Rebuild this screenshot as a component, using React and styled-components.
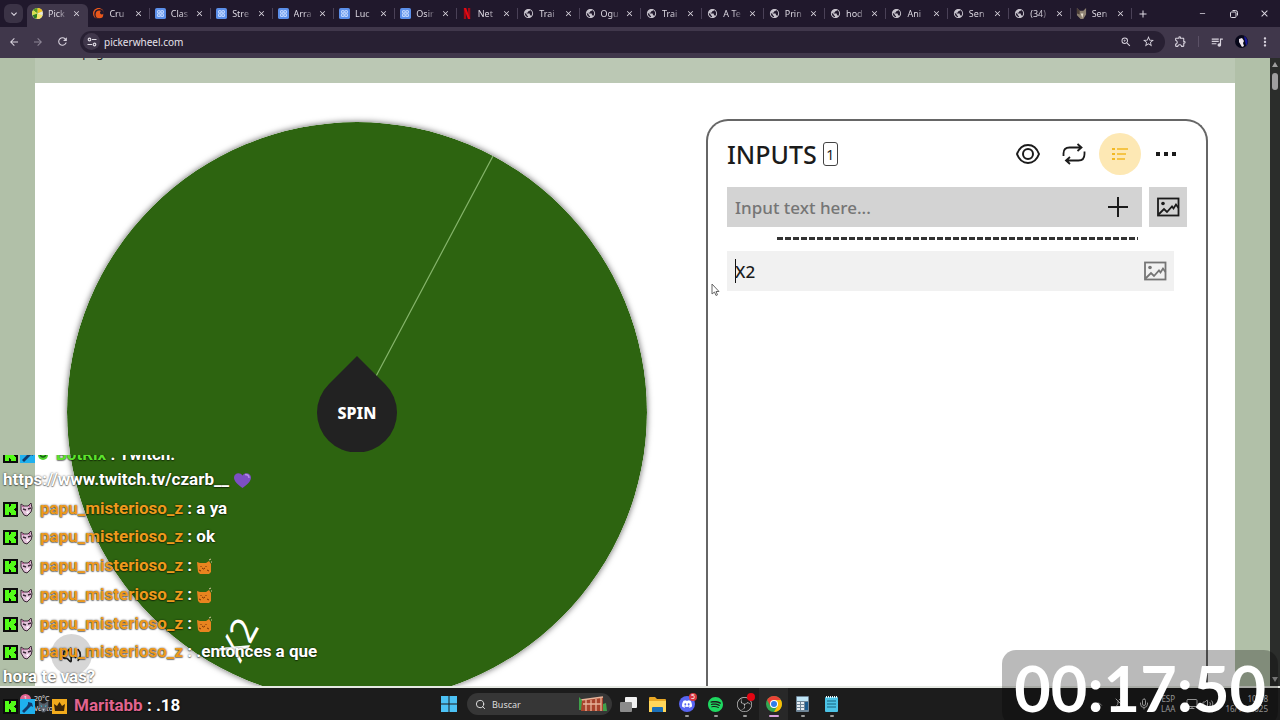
import React from "react";
import styled, { createGlobalStyle, css } from "styled-components";
import {
  SiDiscord,
  SiSpotify,
  SiObsstudio,
  SiCrunchyroll,
} from "react-icons/si";
import {
  MdPublic,
  MdClose,
  MdAdd,
  MdRemove,
  MdExpandMore,
  MdArrowBack,
  MdArrowForward,
  MdRefresh,
  MdZoomIn,
  MdStarBorder,
  MdOutlineExtension,
  MdQueueMusic,
  MdMoreVert,
} from "react-icons/md";
import { Search, Mic, Volume2, Monitor, BellOff, ChevronUp } from "lucide-react";

const tabs = [
  { icon: "wheel", title: "Pick", active: true },
  { icon: "crunchy", title: "Cru" },
  { icon: "blue", title: "Clas" },
  { icon: "blue", title: "Stre" },
  { icon: "blue", title: "Arra" },
  { icon: "blue", title: "Luc" },
  { icon: "blue", title: "Osir" },
  { icon: "netflix", title: "Net" },
  { icon: "globe", title: "Trai" },
  { icon: "globe", title: "Ogu" },
  { icon: "globe", title: "Trai" },
  { icon: "globe", title: "A Te" },
  { icon: "globe", title: "Prin" },
  { icon: "globe", title: "hod" },
  { icon: "globe", title: "Ani" },
  { icon: "globe", title: "Sen" },
  { icon: "globe", title: "(34)" },
  { icon: "cat", title: "Sen" },
];

const messages = [
  { user: "BotRix", color: "#5ce22c", badges: ["kick", "mod", "bot"], text: "Twitch. https://www.twitch.tv/czarb__", emote: "heart" },
  { user: "papu_misterioso_z", text: "a ya" },
  { user: "papu_misterioso_z", text: "ok" },
  { user: "papu_misterioso_z", emote: "cat" },
  { user: "papu_misterioso_z", emote: "cat" },
  { user: "papu_misterioso_z", emote: "cat" },
  { user: "papu_misterioso_z", text: ".entonces a que hora te vas?" },
  { user: "Maritabb", color: "#e0648f", badges: ["kick", "mod", "wolf", "crown"], text: ".18" },
];

const Favicon = ({ kind }) => {
  switch (kind) {
    case "wheel":
      return (
        <svg width="11" height="11" viewBox="0 0 12 12">
          <circle cx="6" cy="6" r="6" fill="#e9e9d8" />
          <path d="M6 6V0a6 6 0 0 1 5.5 3.5z" fill="#f2c41d" />
          <path d="M6 6L1 2.5A6 6 0 0 1 6 0z" fill="#5a9a20" />
          <path d="M6 6L.5 8A6 6 0 0 1 1 2.5z" fill="#d8e04a" />
          <path d="M6 6L5 12A6 6 0 0 1 .5 8z" fill="#2e7d1c" />
          <path d="M6 6L11.5 8A6 6 0 0 1 5 12z" fill="#f6e56a" />
        </svg>
      );
    case "crunchy":
      return <SiCrunchyroll size={11} color="#e8571c" />;
    case "netflix":
      return (
        <svg width="11" height="11" viewBox="0 0 12 12">
          <path d="M2 0h2.500v12H2zM6.500 0H9v12H6.500z" fill="#a30a14" />
          <path d="M2 0h2.500L9 12H6.500z" fill="#e50914" />
        </svg>
      );
    case "blue":
      return (
        <svg width="11" height="11" viewBox="0 0 12 12">
          <rect width="12" height="12" rx="2" fill="#5b8fea" />
          <g fill="none" stroke="#c4d9ff" strokeWidth="1.2">
            <circle cx="4.2" cy="4.2" r="1.5" />
            <circle cx="7.8" cy="4.2" r="1.5" />
            <circle cx="4.2" cy="7.8" r="1.5" />
            <circle cx="7.8" cy="7.8" r="1.5" />
          </g>
        </svg>
      );
    case "cat":
      return (
        <svg width="11" height="11" viewBox="0 0 12 12">
          <path d="M1 0l3 3h4l3-3v7L8 12H5L1 8z" fill="#8d8172" />
          <path d="M1 0l3 3v4L1 6z" fill="#4d4038" />
          <path d="M5 6h3l-1 5z" fill="#e6ddcd" />
        </svg>
      );
    default:
      return <MdPublic size={11} color="#c9c5ce" />;
  }
};

const Badge = ({ kind }) => {
  switch (kind) {
    case "kick":
      return (
        <svg width="15" height="15" viewBox="0 0 15 15">
          <rect width="15" height="15" fill="#0b0b0b" />
          <path d="M2 2h4v3h1V4h1V2h5v4h-1v1h-1v1h1v1h1v4H8v-2H7v-1H6v3H2z" fill="#53fc18" />
        </svg>
      );
    case "mod":
      return (
        <svg width="15" height="15" viewBox="0 0 15 15">
          <rect width="15" height="15" fill="#1fb0ee" />
          <path d="M8 3l4 1 1 4-2-1-2 2-2-2 1-2zM7 7l2 2-5 5-2-2z" fill="#133a6b" />
        </svg>
      );
    case "bot":
      return (
        <svg width="12" height="15" viewBox="0 0 12 15">
          <circle cx="6" cy="7" r="5" fill="#4ed12e" />
          <path d="M3 7q3 4 6 0" stroke="#145c10" strokeWidth="1.5" fill="none" />
        </svg>
      );
    case "wolf":
      return (
        <svg width="13" height="15" viewBox="0 0 15 15">
          <path d="M2 1l4 3h3l4-3v7l-4 6H6L2 8z" fill="#59616c" />
          <path d="M4 6l2 1-1 1zM11 6L9 7l1 1z" fill="#34d0e8" />
          <path d="M6 10h3l-1.500 3z" fill="#c3c9d0" />
        </svg>
      );
    case "crown":
      return (
        <svg width="15" height="15" viewBox="0 0 15 15">
          <rect width="15" height="15" fill="#f2ab1c" />
          <path d="M2 5l3 2 2.500-4L10 7l3-2-1 7H3z" fill="#3b2608" />
        </svg>
      );
    default:
      return (
        <svg width="13" height="15" viewBox="0 0 13 15">
          <path d="M1 2l3 2h4l3-3 1 5-1 4-4 4-3-1-3-5z" fill="#e3c3da" stroke="#3a2836" />
          <path d="M3 7l3 1M8 7l3-1" stroke="#3a2836" strokeWidth="1.5" />
          <path d="M6 10l3-1-1 3z" fill="#fff" />
          <path d="M2 4l2 1M10 3l-1 2" stroke="#b34b88" />
        </svg>
      );
  }
};

const Emote = ({ kind }) =>
  kind === "heart" ? (
    <svg width="19" height="19" viewBox="0 0 19 19">
      <path d="M9.500 17C5 13.500 1 10.500 1 6.500 1 2 7 .5 9.500 4.500 12 .5 18 2 18 6.500c0 4-4 7-8.500 10.500z" fill="#7d4fc4" />
      <path d="M12 3.500c2 0 4 1 4 3.500" stroke="#b58be8" strokeWidth="1.5" fill="none" />
    </svg>
  ) : (
    <svg width="17" height="19" viewBox="0 0 17 19">
      <path d="M1 5l3 1h6l3-2 2 3v8l-2 2H4l-2-2z" fill="#e8841f" />
      <path d="M5 9v1M10 9v1M6 11l1.500 1L9 11M3 13l2 1M11 13l2 1" stroke="#7a3508" fill="none" />
      <path d="M13 3l2-1M15 5h1" stroke="#d8c8a0" />
    </svg>
  );

const PictureIcon = ({ color }) => (
  <svg width="24" height="20" viewBox="0 0 24 20" fill="none" stroke={color} strokeWidth="1.8">
    <rect x="2" y="1.5" width="20.5" height="17" />
    <path d="M2.500 17.500L8 12l3 3 5-5.500 1.500 2 2.500-4 2.500 3.500" />
    <circle cx="7" cy="6.500" r="1.800" fill={color} stroke="none" />
  </svg>
);

const Wheel = () => (
  <WheelSvg viewBox="0 0 580 580">
    <circle cx="290" cy="290" r="290" fill="#2d6410" />
    <path d="M290 290L426 34" stroke="#86b56b" strokeWidth="1.2" />
    <WheelLabel transform="translate(171 517) rotate(-62)">X2</WheelLabel>
  </WheelSvg>
);

const App = () => {
  return (
    <Screen>
      <GlobalStyle />
      <TabStrip>
        <TabSearch aria-label="Search tabs">
          <MdExpandMore size={12} />
        </TabSearch>
        <TabList>
          {tabs.map((tab, i) => (
            <Tab key={i} $active={tab.active}>
              <Favicon kind={tab.icon} />
              <TabTitle>{tab.title}</TabTitle>
              <TabClose aria-label="Close tab">
                <MdClose size={9} />
              </TabClose>
            </Tab>
          ))}
        </TabList>
        <NewTab aria-label="New tab">
          <MdAdd size={12} />
        </NewTab>
        <WindowButtons>
          <WindowButton aria-label="Minimize"><MdRemove size={9} /></WindowButton>
          <WindowButton aria-label="Restore">
            <svg width="8" height="8" viewBox="0 0 8 8" fill="none" stroke="#dedae3">
              <rect x=".5" y="2" width="5.5" height="5.5" rx="1" />
              <path d="M2.500 .5h3q2 0 2 2v3" />
            </svg>
          </WindowButton>
          <WindowButton aria-label="Close"><MdClose size={11} /></WindowButton>
        </WindowButtons>
      </TabStrip>

      <Toolbar>
        <ToolButton aria-label="Back"><MdArrowBack size={12} /></ToolButton>
        <ToolButton aria-label="Forward" $dim><MdArrowForward size={12} /></ToolButton>
        <ToolButton aria-label="Reload"><MdRefresh size={13} /></ToolButton>
        <AddressBar>
          <SiteInfo aria-label="Site information">
            <svg width="10" height="10" viewBox="0 0 10 10" fill="none" stroke="#dedae3" strokeWidth="1.2">
              <circle cx="2.5" cy="2.5" r="1.3" />
              <path d="M5 2.500h4.500M.5 7.500H5" />
              <circle cx="7.5" cy="7.5" r="1.3" />
            </svg>
          </SiteInfo>
          <Address aria-label="Address" defaultValue="pickerwheel.com" />
          <BarButton aria-label="Zoom"><MdZoomIn size={12} /></BarButton>
          <BarButton aria-label="Bookmark"><MdStarBorder size={13} /></BarButton>
        </AddressBar>
        <Extras>
          <BarButton aria-label="Extensions"><MdOutlineExtension size={13} /></BarButton>
          <Divider />
          <BarButton aria-label="Media"><MdQueueMusic size={14} /></BarButton>
          <BarButton aria-label="Profile">
            <svg width="13" height="13" viewBox="0 0 13 13">
              <circle cx="6.5" cy="6.5" r="6.5" fill="#08081a" />
              <path d="M9 1a6.500 6.500 0 0 1 2 10z" fill="#17179a" />
              <path d="M4 4l3-1 2 3-1 2 1 3-2 1-3-5z" fill="#eee6ee" />
            </svg>
          </BarButton>
          <BarButton aria-label="Menu"><MdMoreVert size={14} /></BarButton>
        </Extras>
      </Toolbar>

      <Viewport>
        <Page>
          <Band>
            <BandText>Homepage</BandText>
          </Band>
          <Content>
            <WheelArea>
              <Wheel />
              <SpinButton>
                <svg width="80" height="96" viewBox="0 0 80 96">
                  <path d="M40 0L68 28A40 40 0 1 1 12 28z" fill="#222" />
                </svg>
                <span>SPIN</span>
              </SpinButton>
              <SoundButton aria-label="Sound"><Volume2 size={20} /></SoundButton>
            </WheelArea>
            <Panel>
              <PanelHeader>
                <PanelTitle>INPUTS</PanelTitle>
                <Count>1</Count>
                <Actions>
                  <Action aria-label="Hide">
                    <svg width="24" height="20" viewBox="0 0 24 20" fill="none" stroke="#1b1b1b" strokeWidth="2">
                      <path d="M1 10C3 4.500 7 1 12 1s9 3.500 11 9c-2 5.500-6 9-11 9S3 15.500 1 10z" />
                      <circle cx="12" cy="10" r="5" />
                    </svg>
                  </Action>
                  <Action aria-label="Shuffle">
                    <svg width="24" height="22" viewBox="0 0 24 22" fill="none" stroke="#1b1b1b" strokeWidth="1.8">
                      <path d="M1.500 13V10.500q0-6 6-6H19M15.500 1l4 3.500-4 3.500M22.500 8.500v2.500q0 6.500-6 6.500H4.500M8 14l-4 3.500L8 21" />
                    </svg>
                  </Action>
                  <Action aria-label="List" $highlight>
                    <svg width="16" height="14" viewBox="0 0 16 14" fill="none" stroke="#f2b822" strokeWidth="1.5">
                      <path d="M5 2h11M5 7h9M5 12h8" />
                      <path d="M0 2h3M0 7h3M0 12h3" strokeWidth="2.2" />
                    </svg>
                  </Action>
                  <Action aria-label="More">
                    <svg width="20" height="4" viewBox="0 0 20 4" fill="#1b1b1b">
                      <path d="M0 0h4v4H0zM8 0h4v4H8zM16 0h4v4h-4z" />
                    </svg>
                  </Action>
                </Actions>
              </PanelHeader>
              <EntryForm>
                <EntryBox>
                  <EntryInput aria-label="New input" placeholder="Input text here..." />
                  <IconButton aria-label="Add">
                    <svg width="20" height="20" viewBox="0 0 20 20" stroke="#1b1b1b" strokeWidth="2">
                      <path d="M10 0v20M0 10h20" />
                    </svg>
                  </IconButton>
                </EntryBox>
                <ImageButton aria-label="Add image"><PictureIcon color="#1b1b1b" /></ImageButton>
              </EntryForm>
              <Dashes />
              <Entry>
                <Caret />
                <EntryInput aria-label="Input 1" defaultValue="X2" />
                <IconButton aria-label="Entry image"><PictureIcon color="#757575" /></IconButton>
              </Entry>
            </Panel>
          </Content>
        </Page>
        <Scrollbar>
          <ScrollArrow $up />
          <Thumb />
          <ScrollArrow />
        </Scrollbar>
      </Viewport>

      <Taskbar>
        <Weather>
          <WeatherBadge>1</WeatherBadge>
          <div>
            20°C
            <br />
            Ventoso
          </div>
        </Weather>
        <Apps>
          <AppButton aria-label="Start">
            <svg width="16" height="16" viewBox="0 0 16 16" fill="#4cc2f5">
              <path d="M0 0h7.500v7.500H0zM8.500 0H16v7.500H8.500zM0 8.500h7.500V16H0zM8.500 8.500H16V16H8.500z" />
            </svg>
          </AppButton>
          <SearchBox>
            <Search size={11} color="#e8e8e8" />
            <SearchInput aria-label="Buscar" placeholder="Buscar" />
            <svg width="28" height="16" viewBox="0 0 28 16">
              <path d="M2 4l22-3v14H2z" fill="#a8442c" />
              <path d="M2 4l22-3M4 8h18M7 4v11M12 4v11M17 3v12M22 2v13" stroke="#e8b49a" strokeWidth="1.3" />
              <path d="M0 1l3 3-1 10H0zM24 8l3-1 1 8h-4z" fill="#3fa04a" />
            </svg>
          </SearchBox>
          <AppButton aria-label="Task view">
            <svg width="17" height="15" viewBox="0 0 17 15">
              <rect x="5" width="12" height="11" rx="1" fill="#f1f1f1" />
              <rect y="5" width="12" height="10" rx="1" fill="#8b8b8b" />
            </svg>
          </AppButton>
          <AppButton aria-label="Explorer">
            <svg width="17" height="15" viewBox="0 0 17 15">
              <path d="M0 1q0-1 1-1h5l2 2h8q1 0 1 1v12H0z" fill="#e9a825" />
              <path d="M0 4h17v11H0z" fill="#ffd65a" />
              <path d="M3 11q0-1 1-1h9q1 0 1 1v4H3z" fill="#1a6fb8" />
            </svg>
          </AppButton>
          <AppButton aria-label="Discord" $open>
            <Disc><SiDiscord size={10} /></Disc>
            <Notice>5</Notice>
          </AppButton>
          <AppButton aria-label="Spotify" $open><SiSpotify size={15} color="#1ed760" /></AppButton>
          <AppButton aria-label="OBS" $open>
            <SiObsstudio size={15} color="#c8c8c8" />
            <Notice $dot />
          </AppButton>
          <AppButton aria-label="Chrome" $open $current>
            <svg width="16" height="16" viewBox="0 0 16 16">
              <circle cx="8" cy="8" r="8" fill="#34a853" />
              <path d="M1.100 4A8 8 0 0 1 14.900 4H8L4.500 10z" fill="#ea4335" />
              <path d="M14.900 4A8 8 0 0 1 8 16l3.500-6L8 4z" fill="#fbbc04" />
              <circle cx="8" cy="8" r="4" fill="#fff" />
              <circle cx="8" cy="8" r="3" fill="#2f7de9" />
            </svg>
          </AppButton>
          <AppButton aria-label="Calculator" $open>
            <svg width="13" height="16" viewBox="0 0 13 16">
              <rect width="13" height="16" rx="1" fill="#6f8596" />
              <rect x="1" y="1" width="11" height="4" fill="#bfe6f7" />
              <path d="M1 6h3v2H1zM5 6h3v2H5zM1 9h3v2H1zM5 9h3v2H5zM1 12h3v2H1zM5 12h3v2H5z" fill="#e6edf2" />
              <path d="M9 6h3v8H9z" fill="#1d5c8e" />
            </svg>
          </AppButton>
          <AppButton aria-label="Notepad" $open>
            <svg width="13" height="16" viewBox="0 0 13 16">
              <rect y="1" width="13" height="15" rx="1" fill="#4cc3e6" />
              <path d="M1 1h11" stroke="#e8f6fb" strokeWidth="2" strokeDasharray="1 1" />
              <path d="M2 5h9M2 8h9M2 11h9" stroke="#17637f" />
            </svg>
          </AppButton>
        </Apps>
        <Tray>
          <ChevronUp size={10} />
          <BellOff size={12} />
          <Mic size={12} />
          <TrayText $center>
            ESP
            <br />
            LAA
          </TrayText>
          <Devices>
            <Monitor size={12} />
            <Volume2 size={12} />
          </Devices>
          <TrayText>
            10:28
            <br />
            16/11/2025
          </TrayText>
        </Tray>
      </Taskbar>

      <ChatWindow>
        <ChatList>
          {messages.map((m, i) => (
            <Message key={i}>
              <Badges>
                {(m.badges || ["kick", "fox"]).map((b) => (
                  <Badge key={b} kind={b} />
                ))}
              </Badges>
              <User $color={m.color}>{m.user}</User> : {m.text} {m.emote && <Emote kind={m.emote} />}
            </Message>
          ))}
        </ChatList>
      </ChatWindow>

      <Timer>00:17:50</Timer>

      <Cursor width="9" height="14" viewBox="0 0 9 14">
        <path d="M1 1v10l2.500-2 1.500 3.500 1.500-.7L5 8.500h3z" fill="#fff" stroke="#666" />
      </Cursor>
    </Screen>
  );
};

export default App;

const GlobalStyle = createGlobalStyle`
  * {
    box-sizing: border-box;
  }
  body {
    margin: 0;
    font-family: "Noto Sans", "Open Sans", sans-serif;
  }
  button, input {
    margin: 0;
    padding: 0;
    border: 0;
    background: none;
    font-family: inherit;
    color: inherit;
    outline: none;
  }
  button {
    display: flex;
    align-items: center;
    justify-content: center;
    flex-shrink: 0;
  }
`;

const Screen = styled.div`
  position: relative;
  height: 100vh;
  display: flex;
  flex-direction: column;
  overflow: hidden;
`;

/* browser */
const TabStrip = styled.div`
  display: flex;
  align-items: center;
  height: 27px;
  flex-shrink: 0;
  padding-left: 4px;
  background: #20182c;
  color: #dedae3;
`;
const TabSearch = styled.button`
  width: 19px;
  height: 19px;
  margin-right: 4px;
  border-radius: 6px;
  background: #3b3346;
`;
const TabList = styled.div`
  flex: 1;
  min-width: 0;
  height: 100%;
  display: flex;
  align-items: flex-end;
`;
const Tab = styled.div`
  position: relative;
  flex: 1 1 0;
  min-width: 0;
  height: 23px;
  padding: 0 5px 4px;
  display: flex;
  align-items: center;
  border-radius: 6px 6px 0 0;
  svg {
    flex-shrink: 0;
  }
  ${(props) =>
    props.$active
      ? css`
          background: #40374b;
        `
      : css`
          &::after {
            content: "";
            position: absolute;
            right: 0;
            top: 4px;
            width: 1px;
            height: 11px;
            background: #4a4157;
          }
        `}
`;
const TabTitle = styled.span`
  margin-left: 5px;
  white-space: nowrap;
  font-size: 9px;
  line-height: 12px;
  mask-image: linear-gradient(to right, #000 10px, transparent 20px);
`;
const TabClose = styled.button`
  margin-left: auto;
  width: 13px;
  height: 13px;
`;
const NewTab = styled.button`
  width: 22px;
  height: 22px;
`;
const WindowButtons = styled.div`
  display: flex;
  margin-left: 33px;
`;
const WindowButton = styled.button`
  width: 31px;
  height: 27px;
`;
const Toolbar = styled.div`
  display: flex;
  align-items: center;
  height: 31px;
  flex-shrink: 0;
  padding: 0 4px 2px 2px;
  background: #40374b;
  color: #d8d3de;
`;
const ToolButton = styled.button`
  width: 24px;
  height: 24px;
  opacity: ${(props) => (props.$dim ? 0.5 : 1)};
`;
const AddressBar = styled.div`
  flex: 1;
  display: flex;
  align-items: center;
  height: 22px;
  margin-left: 6px;
  padding: 0 6px 0 3px;
  border-radius: 11px;
  background: #282033;
`;
const SiteInfo = styled.button`
  width: 17px;
  height: 17px;
  border-radius: 50%;
  background: #40374b;
`;
const Address = styled.input`
  flex: 1;
  min-width: 0;
  margin-left: 4px;
  font-size: 10px;
  color: #e6e1ea;
`;
const BarButton = styled.button`
  width: 22px;
  height: 22px;
`;
const Extras = styled.div`
  display: flex;
  align-items: center;
  gap: 2px;
  margin-left: 4px;
`;
const Divider = styled.span`
  width: 1px;
  height: 11px;
  margin: 0 5px;
  background: #5b5166;
`;

/* page */
const Viewport = styled.div`
  flex: 1;
  min-height: 0;
  display: flex;
  overflow: hidden;
  background: #b1c0a8;
`;
const Page = styled.main`
  flex: 1;
  max-width: 1200px;
  margin: 0 auto;
  display: flex;
  flex-direction: column;
  background: #fff;
`;
const Band = styled.div`
  height: 25px;
  flex-shrink: 0;
  overflow: hidden;
  background: #bbc8b4;
`;
const BandText = styled.div`
  margin: -13px 0 0 13px;
  font-size: 12px;
  line-height: 16px;
  color: #222;
`;
const Content = styled.div`
  flex: 1;
  min-height: 0;
  display: grid;
  grid-template-columns: minmax(0, 580fr) minmax(0, 502fr);
  grid-template-rows: minmax(0, 1fr);
  gap: 59px;
  padding: 36px 27px 0 32px;
`;
const WheelArea = styled.div`
  position: relative;
  padding-top: 3px;
`;
const WheelSvg = styled.svg`
  display: block;
  width: 100%;
  border-radius: 50%;
  box-shadow: 0 0 6px rgba(0, 0, 0, 0.6);
`;
const WheelLabel = styled.text`
  font-family: "Noto Sans", sans-serif;
  font-size: 36px;
  fill: #fff;
  text-anchor: middle;
  dominant-baseline: central;
`;
const SpinButton = styled.button`
  position: absolute;
  left: calc(50% - 40px);
  top: 237px;
  width: 80px;
  height: 96px;
  span {
    position: absolute;
    top: 45px;
    font-size: 16px;
    line-height: 24px;
    font-weight: 800;
    color: #fff;
  }
`;
const SoundButton = styled.button`
  position: absolute;
  left: -16px;
  top: 515px;
  width: 41px;
  height: 41px;
  border-radius: 50%;
  background: #d6d6d6;
  color: #1b1b1b;
`;
const Panel = styled.section`
  border: 2px solid #666;
  border-bottom: 0;
  border-radius: 22px 22px 0 0;
  padding: 12px 19px 0;
`;
const PanelHeader = styled.div`
  display: flex;
  align-items: center;
  height: 42px;
`;
const PanelTitle = styled.h2`
  margin: 0;
  font-size: 25px;
  line-height: 32px;
  font-weight: 500;
  color: #1b1b1b;
`;
const Count = styled.span`
  width: 15px;
  height: 24px;
  margin-left: 6px;
  border: 1px solid #444;
  border-radius: 3px;
  font-size: 14px;
  line-height: 24px;
  text-align: center;
  color: #1b1b1b;
`;
const Actions = styled.div`
  display: flex;
  gap: 4px;
  margin-left: auto;
`;
const Action = styled.button`
  width: 42px;
  height: 42px;
  border-radius: 50%;
  background: ${(props) => (props.$highlight ? "#fde8b4" : "none")};
`;
const EntryForm = styled.div`
  display: flex;
  gap: 7px;
  margin-top: 12px;
`;
const EntryBox = styled.div`
  flex: 1;
  display: flex;
  height: 40px;
  padding: 0 5px 0 8px;
  background: #d3d3d3;
`;
const EntryInput = styled.input`
  flex: 1;
  min-width: 0;
  font-size: 17px;
  font-weight: 500;
  color: #1b1b1b;
  &::placeholder {
    color: #757575;
    opacity: 1;
  }
`;
const IconButton = styled.button`
  width: 38px;
  height: 40px;
`;
const ImageButton = styled(IconButton)`
  background: #d3d3d3;
`;
const Dashes = styled.div`
  height: 3px;
  margin: 10px 49px 0 50px;
  background: repeating-linear-gradient(to right, #333 0 6px, transparent 6px 8px);
`;
const Entry = styled.div`
  display: flex;
  align-items: center;
  height: 40px;
  margin: 11px 13px 0 0;
  padding-left: 8px;
  background: #f1f1f1;
`;
const Caret = styled.span`
  width: 1px;
  height: 24px;
  margin-right: -1px;
  background: #111;
`;
const Scrollbar = styled.div`
  width: 10px;
  display: flex;
  flex-direction: column;
  align-items: center;
  padding: 4px 0;
  background: #2b2d2b;
`;
const ScrollArrow = styled.span`
  border: 3px solid transparent;
  ${(props) =>
    props.$up
      ? css`
          border-top: 0;
          border-bottom: 5px solid #9f9f9f;
        `
      : css`
          margin-top: auto;
          border-bottom: 0;
          border-top: 5px solid #9f9f9f;
        `}
`;
const Thumb = styled.span`
  width: 6px;
  height: 17px;
  margin-top: 6px;
  border-radius: 3px;
  background: #9f9f9f;
`;

/* taskbar */
const Taskbar = styled.footer`
  display: grid;
  grid-template-columns: 1fr auto 1fr;
  align-items: center;
  height: 34px;
  flex-shrink: 0;
  border-top: 2px solid #e6e9e3;
  background: #1c1c1c;
  color: #e8e8e8;
`;
const Weather = styled.div`
  display: flex;
  gap: 3px;
  padding-left: 20px;
  font-size: 7px;
  line-height: 10px;
`;
const WeatherBadge = styled.span`
  width: 11px;
  height: 11px;
  border-radius: 50%;
  background: #e0648f;
  text-align: center;
`;
const Apps = styled.div`
  display: flex;
  align-items: center;
`;
const AppButton = styled.button`
  position: relative;
  width: 29px;
  height: 32px;
  ${(props) =>
    props.$open &&
    css`
      &::after {
        content: "";
        position: absolute;
        bottom: 3px;
        width: ${props.$current ? 10 : 4}px;
        height: 2px;
        border-radius: 1px;
        background: ${props.$current ? "#d8a0dc" : "#9a9a9a"};
      }
    `}
  ${(props) =>
    props.$current &&
    css`
      background: #282828;
    `}
`;
const SearchBox = styled.div`
  display: flex;
  align-items: center;
  width: 145px;
  height: 22px;
  margin: 0 2px 0 4px;
  padding: 0 5px 0 8px;
  border-radius: 11px;
  background: #363636;
`;
const SearchInput = styled.input`
  flex: 1;
  min-width: 0;
  margin-left: 6px;
  font-size: 9px;
  &::placeholder {
    color: #dcdcdc;
    opacity: 1;
  }
`;
const Disc = styled.span`
  width: 16px;
  height: 16px;
  display: flex;
  align-items: center;
  justify-content: center;
  border-radius: 50%;
  background: #5865f2;
  color: #fff;
`;
const Notice = styled.span`
  position: absolute;
  top: 5px;
  right: 4px;
  width: 8px;
  height: 8px;
  border-radius: 50%;
  font-size: 7px;
  line-height: 8px;
  background: ${(props) => (props.$dot ? "#e30613" : "#d9363e")};
  color: #fff;
`;
const Tray = styled.div`
  display: flex;
  align-items: center;
  justify-content: flex-end;
  gap: 11px;
  padding-right: 12px;
  color: #c8c8c8;
`;
const Devices = styled.div`
  display: flex;
  gap: 4px;
`;
const TrayText = styled.div`
  font-size: 8px;
  line-height: 10px;
  text-align: ${(props) => (props.$center ? "center" : "right")};
`;

/* stream overlays */
const ChatWindow = styled.div`
  position: absolute;
  left: 0;
  bottom: 0;
  width: 330px;
  height: 265px;
  overflow: hidden;
`;
const ChatList = styled.ul`
  position: absolute;
  left: 0;
  bottom: 2px;
  width: 100%;
  height: 276px;
  margin: 0;
  padding: 0 3px;
  display: flex;
  flex-direction: column;
  justify-content: space-between;
  list-style: none;
`;
const Message = styled.li`
  font-family: Roboto, sans-serif;
  font-size: 17px;
  line-height: 25px;
  font-weight: 700;
  color: #fff;
  text-shadow: 0 0 2px rgba(0, 0, 0, 0.7), 0 1px 1px rgba(0, 0, 0, 0.4);
  svg {
    vertical-align: middle;
  }
`;
const Badges = styled.span`
  display: inline-flex;
  gap: 2px;
  margin-right: 7px;
  vertical-align: -3px;
`;
const User = styled.span`
  color: ${(props) => props.$color || "#ee9a1c"};
`;
const Timer = styled.div`
  position: absolute;
  right: 2px;
  bottom: -6px;
  padding: 0 12px;
  border-radius: 14px;
  background: rgba(0, 0, 0, 0.27);
  font-family: Lato, sans-serif;
  font-size: 63px;
  line-height: 76px;
  font-weight: 700;
  color: #fff;
`;
const Cursor = styled.svg`
  position: absolute;
  left: 711px;
  top: 283px;
`;
